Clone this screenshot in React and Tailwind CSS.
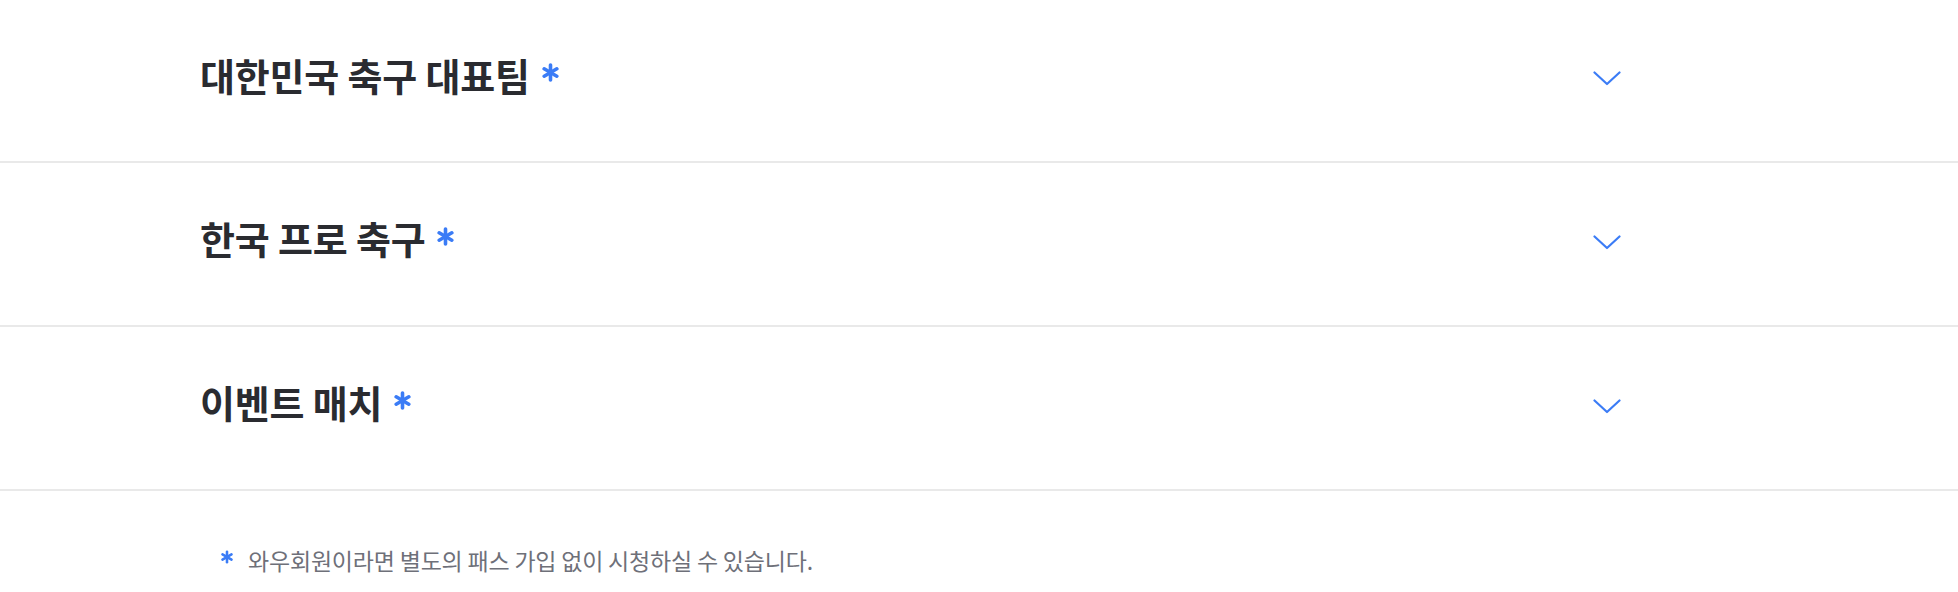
import { useState } from 'react'

const sections = [
  { id: 'national', title: '대한민국 축구 대표팀' },
  { id: 'kleague', title: '한국 프로 축구' },
  { id: 'event', title: '이벤트 매치' },
]

function Star({ className }) {
  return (
    <svg viewBox="0 0 16 18" className={className} fill="none" stroke="#3b7cf6" strokeWidth="3.4" strokeLinecap="round">
      <line x1="8" y1="2" x2="8" y2="16" />
      <line x1="2" y1="5.5" x2="14" y2="12.5" />
      <line x1="14" y1="5.5" x2="2" y2="12.5" />
    </svg>
  )
}

function Chevron({ open }) {
  return (
    <svg
      viewBox="0 0 28 15"
      className={`w-[28px] h-[15px] transition-transform ${open ? 'rotate-180' : ''}`}
      fill="none"
      stroke="#3b7cf6"
      strokeWidth="2.2"
      strokeLinecap="round"
      strokeLinejoin="round"
    >
      <polyline points="1.5,1.5 14,13 26.5,1.5" />
    </svg>
  )
}

export default function App() {
  const [open, setOpen] = useState(null)

  return (
    <div className="w-[1958px] h-[592px] bg-white overflow-hidden"
      style={{ fontFamily: '"Noto Sans CJK KR", "Noto Sans", sans-serif' }}>
      {sections.map((s, i) => (
        <div key={s.id} className="border-b-2 border-[#e9e9e9]">
          <button
            onClick={() => setOpen(open === s.id ? null : s.id)}
            className={`ml-[200px] w-[1421px] flex items-center justify-between ${i === 0 ? 'h-[161px]' : 'h-[162px]'}`}
          >
            <span className="flex items-center -mt-[12px]">
              <span className="text-[38px] font-bold tracking-[-0.2px] text-[#2a2b30] leading-none">
                {s.title}
              </span>
              <Star className="w-[17px] h-[19px] ml-[12px] -mt-[4px]" />
            </span>
            <span className="-mt-[4px]">
              <Chevron open={open === s.id} />
            </span>
          </button>
        </div>
      ))}

      {/* Footnote */}
      <div className="ml-[221px] mt-[58px] flex items-center">
        <Star className="w-[12px] h-[14px] -mt-[7px]" />
        <p className="ml-[15px] text-[23px] tracking-[-0.2px] text-[#6e7079] leading-none">
          와우회원이라면 별도의 패스 가입 없이 시청하실 수 있습니다.
        </p>
      </div>
    </div>
  )
}
